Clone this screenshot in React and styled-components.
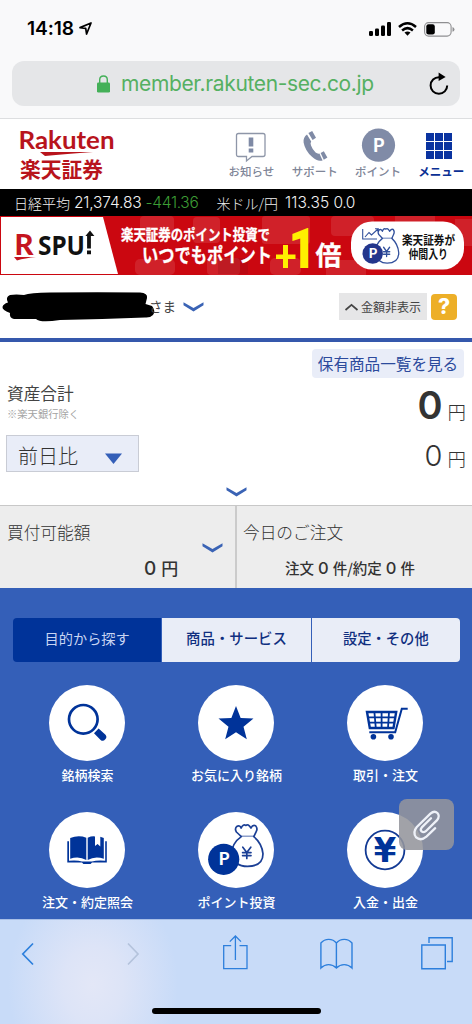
import React from 'react';
import styled, { createGlobalStyle } from 'styled-components';

const NAVY = '#003399';
const JP = '"Noto Sans CJK JP", "Noto Sans", sans-serif';

const GlobalStyle = createGlobalStyle`
  * { box-sizing: border-box; }
  body { margin: 0; background: #fff; font-family: ${JP}; color: #333; }
  svg { display: block; flex: none; overflow: visible; }
  button { font-family: inherit; border: 0; padding: 0; margin: 0; background: none; color: inherit; }
`;

const Screen = styled.div`
  width: 472px;
  height: 1024px;
  display: flex;
  flex-direction: column;
  overflow: hidden;
  background: #fff;
`;

const T = styled.span`
  display: block;
  white-space: pre;
  line-height: 1;
  font-size: ${(p) => p.$size}px;
  font-weight: ${(p) => p.$weight || 400};
  letter-spacing: ${(p) => p.$track || 0}px;
  color: ${(p) => p.$color || 'inherit'};
`;
const Digits = styled(T)`
  font-family: Inter, sans-serif;
`;

/* Browser chrome */
const BrowserTop = styled.div`
  height: 119px;
  background: #f9f9fa;
  border-bottom: 1px solid #dddee0;
  flex: none;
`;
const StatusBar = styled.div`
  height: 61px;
  padding: 0 17px 3px 27px;
  display: flex;
  align-items: center;
  justify-content: space-between;
`;
const StatusGroup = styled.div`
  display: flex;
  align-items: center;
  gap: ${(p) => p.$gap}px;
  color: #000;
`;
const AddressBar = styled.div`
  height: 45px;
  margin: 0 12px;
  padding: 0 11px 0 85px;
  border-radius: 12px;
  background: #e5e6e8;
  display: flex;
  align-items: center;
`;
const Url = styled(Digits)`
  color: #55b062;
  margin-left: 11px;
  flex: 1;
`;

/* Site header */
const SiteHeader = styled.header`
  height: 70px;
  display: flex;
  justify-content: space-between;
  padding: 0 0 0 20px;
  background: #fff;
  flex: none;
`;
const HeaderNav = styled.nav`
  display: flex;
  margin-right: -1px;
`;
const NavItem = styled.a`
  width: 63.3px;
  display: flex;
  flex-direction: column;
  align-items: center;
  color: ${(p) => (p.$active ? '#0a2f94' : '#7f8698')};
`;
const NavIcon = styled.div`
  height: 47px;
  padding-top: 9px;
`;

const Ticker = styled.div`
  height: 27px;
  background: #000;
  color: #f2f2f2;
  padding: 1px 14px 0;
  display: flex;
  align-items: center;
  flex: none;
`;
const Quote = styled(T)`
  margin-left: ${(p) => p.$gap || 0}px;
  font-family: ${(p) => (p.$latin ? 'Inter, sans-serif' : JP)};
`;
const Banner = styled.div`
  height: 59px;
  flex: none;
`;

/* User row */
const UserRow = styled.div`
  height: 67px;
  border-bottom: 4px solid #3558ac;
  padding: 0 15px 0 2px;
  display: flex;
  align-items: center;
  flex: none;
`;
const UserName = styled.div`
  display: flex;
  align-items: center;
  flex: 1;
`;
const Honorific = styled(T)`
  margin: 1px 7px 0 1px;
`;
const HideButton = styled.button`
  width: 88px;
  height: 27px;
  background: #e6e6e7;
  display: flex;
  align-items: center;
  justify-content: center;
  gap: 3px;
  margin-right: 4px;
`;
const HelpButton = styled.button`
  width: 26px;
  height: 26px;
  border-radius: 4px;
  background: #edaf28;
  color: #fff;
  display: flex;
  align-items: center;
  justify-content: center;
`;

/* Assets */
const Assets = styled.section`
  height: 163px;
  padding: 7px 6px 0 7px;
  display: flex;
  flex-direction: column;
  flex: none;
`;
const HoldingsLink = styled.a`
  align-self: flex-end;
  height: 29px;
  width: 152px;
  margin-right: 2px;
  border-radius: 4px;
  background: #e9edf8;
  display: flex;
  align-items: center;
  justify-content: center;
`;
const AssetRow = styled.div`
  display: flex;
  justify-content: space-between;
  height: ${(p) => p.$h}px;
`;
const AssetLabel = styled.div`
  padding-top: 7px;
  display: flex;
  flex-direction: column;
  gap: 7px;
`;
const Amount = styled.div`
  display: flex;
  align-items: baseline;
  gap: ${(p) => p.$gap}px;
  padding-top: ${(p) => p.$top}px;
  color: #333;
`;
const CompareSelect = styled.button`
  width: 133px;
  height: 37px;
  border: 1px solid #c9ccd5;
  background: #e9edf8;
  padding: 4px 16px 0 11px;
  display: flex;
  align-items: center;
  justify-content: space-between;
  color: #333;
  margin-left: -1px;
`;
const Expander = styled.div`
  display: flex;
  justify-content: center;
  padding-top: 15px;
`;

const Summary = styled.section`
  height: 83px;
  display: flex;
  background: #ededed;
  border-top: 1px solid #c8c8c8;
  flex: none;
`;
const SummaryCell = styled.div`
  width: ${(p) => p.$w}px;
  border-right: ${(p) => (p.$divided ? '2px solid #cbcbcb' : '0')};
  padding: 18px 12px 0 ${(p) => (p.$divided ? 7 : 6)}px;
`;
const SummaryValue = styled.div`
  display: flex;
  align-items: baseline;
  height: 20px;
  gap: ${(p) => p.$gap}px;
  margin: ${(p) => p.$top}px 0 0 ${(p) => p.$left}px;
`;
const SummaryHead = styled.div`
  display: flex;
  justify-content: space-between;
  align-items: flex-start;
  height: 17px;
`;
const ChevronSlot = styled.div`
  padding-top: 19px;
`;

/* Menu */
const Menu = styled.section`
  height: 331px;
  background: #345fb8;
  padding: 30px 12px 0 13px;
  position: relative;
  flex: none;
`;
const Tabs = styled.div`
  display: flex;
  gap: 1px;
  height: 44px;
  border-radius: 4px;
  overflow: hidden;
`;
const Tab = styled.button`
  flex: 1;
  display: flex;
  align-items: center;
  justify-content: center;
  padding-bottom: 3px;
  background: ${(p) => (p.$active ? NAVY : '#e9edf7')};
  color: ${(p) => (p.$active ? '#c9d5f2' : '#102f80')};
`;
const Grid = styled.div`
  display: grid;
  grid-template-columns: repeat(3, 149px);
  grid-auto-rows: 127px;
  padding-top: 23px;
  margin-left: -1px;
`;
const Tile = styled.a`
  display: flex;
  flex-direction: column;
  align-items: center;
  gap: 7px;
  color: #fff;
`;
const TileLabel = styled(T)`
  margin-left: 2px;
`;
const Disc = styled.div`
  width: 76px;
  height: 76px;
  border-radius: 50%;
  background: #fff;
`;
const ClipButton = styled.button`
  position: absolute;
  left: 399px;
  top: 211px;
  width: 55px;
  height: 51px;
  border-radius: 8px;
  background: rgba(148, 149, 156, 0.88);
`;

/* Browser bottom bar */
const BottomBar = styled.div`
  height: 105px;
  background: radial-gradient(ellipse 85px 110px at 93px 65px, #e3e7f7 0%, #dde4f7 35%, rgba(200, 219, 248, 0) 100%), #c8dbf8;
  border-top: 1px solid #a9bfe6;
  display: flex;
  flex-direction: column;
  align-items: center;
  flex: none;
`;
const BottomIcons = styled.div`
  height: 88px;
  width: 100%;
  padding: 15px 0 0 22px;
  display: grid;
  grid-template-columns: 105px 96px 97px 101px 1fr;
`;
const HomeBar = styled.div`
  width: 169px;
  height: 6px;
  border-radius: 3px;
  background: #000;
`;

const Chevron = () => (
  <svg width="21" height="10" viewBox="0 0 21 10">
    <path d="M0.5 0.3 L10.5 6 L20.5 0.3 V3.2 L10.5 9.6 L0.5 3.2Z" fill="#3a63b5" />
  </svg>
);

const LocationArrow = () => (
  <svg width="13" height="13" viewBox="0 0 13 13">
    <path d="M12 1 L7.6 12 L6.7 6.4 L1 5.6Z" fill="none" stroke="#000" strokeWidth="1.7" strokeLinejoin="round" />
  </svg>
);
const Signal = () => (
  <svg width="22" height="14" viewBox="0 0 22 14">
    <rect x="0" y="9" width="4" height="5" rx="1.2" />
    <rect x="6" y="6.5" width="4" height="7.5" rx="1.2" />
    <rect x="12" y="3.5" width="4" height="10.5" rx="1.2" />
    <rect x="18" y="0" width="4" height="14" rx="1.2" />
  </svg>
);
const Wifi = () => (
  <svg width="19" height="14" viewBox="0 0 19 14">
    <g fill="none" stroke="#000" strokeWidth="2.5">
      <path d="M1 5 Q9.5 -2.4 18 5" />
      <path d="M4.1 8.5 Q9.5 3.8 14.9 8.5" />
    </g>
    <path d="M6.5 10.6 Q9.5 8.2 12.5 10.6 L9.5 13.8Z" />
  </svg>
);
const Battery = () => (
  <svg width="31" height="15" viewBox="0 0 31 15">
    <rect x="0.6" y="0.6" width="26.5" height="13.5" rx="4" fill="none" stroke="#8f8f91" strokeWidth="1.1" />
    <rect x="2.3" y="2.3" width="8.5" height="10.1" rx="2.2" />
    <path d="M28.5 5 Q30.5 5.6 30.5 7.4 Q30.5 9.2 28.5 9.8Z" fill="#8f8f91" />
  </svg>
);
const Lock = () => (
  <svg width="13" height="18" viewBox="0 0 13 18">
    <path d="M2.7 8 V4.8 Q2.7 1 6.5 1 Q10.3 1 10.3 4.8 V8" fill="none" stroke="#44b058" strokeWidth="1.4" />
    <rect x="0" y="7.6" width="13" height="10" rx="1.4" fill="#44b058" />
  </svg>
);
const Reload = () => (
  <svg width="20" height="24" viewBox="0 0 20 24">
    <path d="M11 5.2 H10 A8.3 8.3 0 1 0 18.2 13.5" fill="none" stroke="#000" strokeWidth="2" />
    <path d="M9.6 0.5 L16.6 5 L9.6 9Z" />
  </svg>
);

const Logo = () => (
  <svg width="96" height="70" viewBox="0 0 96 70" fill="#b8141c">
    <text x="-1.5" y="30" fontFamily="Lato, sans-serif" fontWeight="700" fontSize="25" textLength="96" lengthAdjust="spacingAndGlyphs">Rakuten</text>
    <path d="M20 33 H73 Q46 35 25 37Z" />
    <text x="0" y="58.3" fontFamily="Noto Sans CJK JP" fontWeight="700" fontSize="21" textLength="83" lengthAdjust="spacingAndGlyphs">楽天証券</text>
  </svg>
);
const NoticeIcon = () => (
  <svg width="30" height="34" viewBox="0 0 30 34" fill="#7f8aa5">
    <path d="M2.5 5.5 H27 Q29 5.5 29 7.5 V26.5 Q29 28.5 27 28.5 H16 L10.5 33 V28.5 H2.5 Q0.5 28.5 0.5 26.5 V7.5 Q0.5 5.5 2.5 5.5Z" fill="#fff" stroke="#8e96a8" strokeWidth="1.3" />
    <rect x="12.7" y="9.5" width="4.6" height="9" />
    <rect x="12.7" y="20.5" width="4.6" height="4" />
  </svg>
);
const PhoneIcon = () => (
  <svg width="26" height="34" viewBox="0 0 26 34" fill="#7f8aa5">
    <path d="M5 6.6 L9.2 13.4 Q8 14.8 9 17.6 Q10.6 22 13.6 24.6 Q15.4 26 17.4 25.6 L20.6 32.4 Q15.8 34.2 10 28.8 Q3 22.4 1.6 14.4 Q1 9.6 5 6.6Z" />
    <path d="M6.4 5 L10.2 3 L14 9.8 L10.6 12Z" />
    <path d="M18.6 25 L21.8 23.2 L25.4 29.4 L21.8 31.8Z" />
  </svg>
);
const PointIcon = () => (
  <svg width="34" height="34" viewBox="0 0 34 34">
    <circle cx="17.5" cy="17.2" r="16.6" fill="#808ba7" />
    <text x="17.8" y="23.7" textAnchor="middle" fontFamily="Noto Sans CJK JP" fontWeight="700" fontSize="18" fill="#fff">P</text>
  </svg>
);
const GridIcon = () => (
  <svg width="30" height="34" viewBox="0 0 30 34" fill="#0a33a0">
    {[0, 1, 2].map((r) => [0, 1, 2].map((c) => <rect key={`${r}${c}`} x={c * 9} y={5 + r * 9} width="8" height="8" />))}
  </svg>
);

const MoneyBag = ({ stroke, width = 1.7 }) => (
  <g fill="none" stroke={stroke} strokeWidth={width} strokeLinejoin="round" strokeLinecap="round">
    <path d="M43.3 24.6 Q41 22.4 38.4 20 Q36.4 16.8 38.8 14.4 Q41.6 12.8 43.2 16 Q45 11.6 48 13.4 Q50 11.4 53 16 Q54.6 12.6 57.6 13.8 Q60 16.6 58.2 19.6 Q57 22.2 55.8 24.6 Z" />
    <path d="M43.3 24.6 Q34 31 33.5 42 Q36 54.4 49.5 54.4 Q65 54.4 65 41.8 Q64 31.4 55.8 24.6" fill="#fff" />
    <path d="M44.8 35.2 L48.8 40.4 L52.8 35.2 M48.8 40.4 V46.5 M44.6 40.6 H53 M44.6 43.6 H53" />
  </g>
);

const AdBanner = () => (
  <svg width="472" height="59" viewBox="0 0 472 59">
    <rect width="472" height="59" fill="#cb0710" />
    <g fill="#fff" opacity="0.1">
      <rect x="140" y="0" width="34" height="21" rx="4" />
      <rect x="193" y="1" width="27" height="26" rx="4" />
      <rect x="262" y="0" width="48" height="28" rx="3" />
      <rect x="331" y="0" width="43" height="20" rx="4" />
      <rect x="135" y="43" width="40" height="16" rx="5" />
      <rect x="207" y="42" width="33" height="17" rx="4" />
      <rect x="270" y="42" width="31" height="17" rx="5" />
      <rect x="326" y="44" width="40" height="15" />
      <rect x="395" y="0" width="40" height="16" />
      <rect x="455" y="3" width="17" height="27" />
    </g>
    <rect x="218" y="42" width="30" height="16" fill="#870b13" opacity="0.25" />
    <path d="M1 1 H103 L118 58 H1Z" fill="#fff" />
    <text x="14.5" y="39" fontFamily="Lato, sans-serif" fontWeight="900" fontSize="28" fill="#c51520" textLength="19" lengthAdjust="spacingAndGlyphs">R</text>
    <path d="M14 41 H36 Q25 42 17 44.5Z" fill="#c51520" />
    <text x="38" y="38.5" fontFamily="Noto Sans, sans-serif" fontWeight="700" fontSize="27" fill="#111" textLength="47" lengthAdjust="spacingAndGlyphs">SPU</text>
    <path d="M87 38.3 h4 v-3.8 h-4Z M87.1 32.5 H90.9 V20 H94.4 L90 14.5 L85.4 20 H87.1Z" fill="#111" />
    <g fontFamily="Noto Sans CJK JP" fontWeight="700" fill="#fff" stroke="#fff" strokeWidth="0.3">
      <text x="121" y="23.5" fontSize="15.3" textLength="149" lengthAdjust="spacingAndGlyphs">楽天証券のポイント投資で</text>
      <text x="142" y="46.7" fontSize="20" textLength="130" lengthAdjust="spacingAndGlyphs">いつでもポイント</text>
      <text x="315.5" y="48.5" fontSize="26" textLength="26" lengthAdjust="spacingAndGlyphs">倍</text>
    </g>
    <g fill="#fff000">
      <path d="M283 29 H288 V38.5 H295.5 V43 H288 V52 H283 V43 H276 V38.5 H283Z" />
      <text x="288.5" y="51.5" fontFamily="Roboto, sans-serif" fontWeight="900" fontSize="56" textLength="28" lengthAdjust="spacingAndGlyphs">1</text>
    </g>
    <rect x="351" y="5.5" width="113" height="48" rx="21" fill="#fff" />
    <g transform="translate(350 2) scale(0.75 0.83)">
      <MoneyBag stroke="#31509c" />
    </g>
    <path d="M362.7 13 V23 H377 M365 21 L369 16.5 L371.5 19 L378 13 M375 12.7 H378.3 V16" fill="none" stroke="#31509c" strokeWidth="1.1" />
    <circle cx="372.7" cy="37.5" r="10.2" fill="#23368c" />
    <text x="372.9" y="42.4" textAnchor="middle" fontFamily="Noto Sans CJK JP" fontWeight="700" fontSize="13.5" fill="#fff">P</text>
    <g fontFamily="Noto Sans CJK JP" fontWeight="700" fill="#111">
      <text x="402" y="29" fontSize="12.3" textLength="53" lengthAdjust="spacingAndGlyphs">楽天証券が</text>
      <text x="408.5" y="42.5" fontSize="12.3" textLength="39.5" lengthAdjust="spacingAndGlyphs">仲間入り</text>
    </g>
  </svg>
);

const Redaction = () => (
  <svg width="146" height="30" viewBox="0 0 146 30">
    <path d="M8 3 Q14 2 22 3 Q28 0.5 48 0.5 Q98 0 138 0.5 Q146 1 145 6 L143.5 12 L150 14 Q154 19 151 23 Q148 26 143 25.5 Q100 27 58 28 Q38 31 34 27 L12 27 Q7 26 8 21 Q0 18 0.5 15 Q1 12 6 10.5 Q3 5 8 3Z" />
  </svg>
);

const SearchIcon = () => (
  <svg width="76" height="76" viewBox="0 0 76 76">
    <circle cx="34.3" cy="34.3" r="14.3" fill="none" stroke={NAVY} strokeWidth="2.7" />
    <path d="M45 48.2 L49.6 43.6 L56.5 49.7 Q58.4 52 56.3 54.3 Q54 57 51.6 54.9Z" fill={NAVY} />
  </svg>
);
const starPoints = Array.from({ length: 10 }, (_, i) => {
  const r = i % 2 ? 7.9 : 18.4;
  const a = (Math.PI / 5) * i - Math.PI / 2;
  return `${38 + r * Math.cos(a)},${39.3 + r * Math.sin(a)}`;
}).join(' ');
const StarIcon = () => (
  <svg width="76" height="76" viewBox="0 0 76 76">
    <polygon points={starPoints} fill={NAVY} />
  </svg>
);
const CartIcon = () => (
  <svg width="76" height="76" viewBox="0 0 76 76" fill="none" stroke={NAVY}>
    <path d="M20 27 H49.2 L46.5 43 H22.8Z" strokeWidth="2.4" />
    <path d="M21 32.3 H48 M22 37.6 H47 M27.4 27 L28.8 43 M34.6 27 V43 M42 27 L41 43" strokeWidth="1.8" />
    <path d="M60.7 23.8 H54.8 L48.2 47.3 H22.3" strokeWidth="2" />
    <g fill={NAVY} stroke="none">
      <circle cx="26.4" cy="51.8" r="2.8" />
      <circle cx="44" cy="51.8" r="2.8" />
    </g>
  </svg>
);
const BookIcon = () => (
  <svg width="76" height="76" viewBox="0 0 76 76" fill={NAVY}>
    <path d="M18.3 29.3 H20 V48.7 Q28.5 48 33 49.5 H43 Q48 48 56.2 48.7 V29.3 H57.8 V50.6 H43 L41.6 52 H34.4 L33 50.6 H18.3Z" />
    <path d="M21.2 26 Q29.5 22.8 37.3 25.7 V48 Q30 43.6 21.2 46.7Z" />
    <path d="M38.7 25.7 Q42.5 24 46 24.4 V34 L48.6 32 L51.3 34.6 V24.8 L54.8 26 V46.7 Q46 43.6 38.7 48Z" />
  </svg>
);
const PointInvestIcon = () => (
  <svg width="76" height="76" viewBox="0 0 76 76">
    <MoneyBag stroke="#1b3f95" />
    <circle cx="25.7" cy="47.3" r="15.6" fill={NAVY} />
    <text x="26.2" y="53.2" textAnchor="middle" fontFamily="Noto Sans CJK JP" fontWeight="700" fontSize="17" fill="#fff">P</text>
  </svg>
);
const YenIcon = () => (
  <svg width="76" height="76" viewBox="0 0 76 76">
    <circle cx="38" cy="38" r="19.4" fill="none" stroke="#123a94" strokeWidth="1.8" />
    <text x="38" y="50.3" textAnchor="middle" fontFamily="DejaVu Sans" fontWeight="700" fontSize="33.5" textLength="22.5" lengthAdjust="spacingAndGlyphs" fill={NAVY}>¥</text>
  </svg>
);
const ClipIcon = () => (
  <svg width="55" height="51" viewBox="0 0 55 51">
    <path d="M36.2 29.2 L27.4 37.6 Q21.6 42.4 17.2 38.4 Q13.2 33.6 17.8 28 L31.4 14.6 Q35.4 11.2 38.4 14 Q41.4 17.2 37.8 21.4 L26.8 32.2 Q24.4 34 22.6 32.4 Q20.8 30.6 22.8 28.4 L32 19.2" fill="none" stroke="#eef1f8" strokeWidth="2.3" strokeLinecap="round" />
  </svg>
);

const BLUE = '#2d7fdc';
const BackIcon = ({ color, flip }) => (
  <svg width="12" height="38" viewBox="0 0 12 38">
    <path d={flip ? 'M1 8.5 L11 19 L1 29.5' : 'M11 8.5 L0.8 19 L11 29.5'} fill="none" stroke={color} strokeWidth="1.7" />
  </svg>
);
const ShareIcon = () => (
  <svg width="25" height="38" viewBox="0 0 25 38" fill="none" stroke={BLUE} strokeWidth="1.3">
    <path d="M8.2 10.6 H0.7 V33.7 H24 V10.6 H16.5 M12.4 25 V1 M6.8 6.6 L12.4 1 L18 6.6" />
  </svg>
);
const BookmarksIcon = () => (
  <svg width="33" height="38" viewBox="0 0 33 38" fill="none" stroke={BLUE} strokeWidth="1.4">
    <path d="M16.4 8 V33 M16.4 8 Q13.5 4.4 8.7 4.4 Q4 4.4 0.9 8 V33 Q4.4 29.6 8.6 29.6 Q13 29.6 16.4 33 Q19.8 29.6 24.2 29.6 Q28.6 29.6 32 33 V8 Q29 4.4 24.2 4.4 Q19.4 4.4 16.4 8" />
  </svg>
);
const TabsIcon = () => (
  <svg width="32" height="38" viewBox="0 0 32 38" fill="none" stroke={BLUE} strokeWidth="1.4">
    <path d="M0.8 10 H24.3 V33.8 H0.8Z M8 8 V2.8 H31.2 V26.5 H26" />
  </svg>
);

const NAV = [
  { label: 'お知らせ', icon: <NoticeIcon /> },
  { label: 'サポート', icon: <PhoneIcon /> },
  { label: 'ポイント', icon: <PointIcon /> },
  { label: 'メニュー', icon: <GridIcon />, active: true },
];
const TILES = [
  ['銘柄検索', <SearchIcon />],
  ['お気に入り銘柄', <StarIcon />],
  ['取引・注文', <CartIcon />],
  ['注文・約定照会', <BookIcon />],
  ['ポイント投資', <PointInvestIcon />],
  ['入金・出金', <YenIcon />],
];

export default function App() {
  return (
    <Screen>
      <GlobalStyle />
      <BrowserTop>
        <StatusBar>
          <StatusGroup $gap={5}>
            <Digits $size={19.2} $weight={600} $track={-0.1}>14:18</Digits>
            <LocationArrow />
          </StatusGroup>
          <StatusGroup $gap={7}>
            <Signal />
            <Wifi />
            <Battery />
          </StatusGroup>
        </StatusBar>
        <AddressBar>
          <Lock />
          <Url $size={21} $track={-0.36}>member.rakuten-sec.co.jp</Url>
          <Reload />
        </AddressBar>
      </BrowserTop>

      <SiteHeader>
        <Logo />
        <HeaderNav>
          {NAV.map((n) => (
            <NavItem key={n.label} $active={n.active}>
              <NavIcon>{n.icon}</NavIcon>
              <T $size={11.5} $weight={n.active ? 700 : 500}>{n.label}</T>
            </NavItem>
          ))}
        </HeaderNav>
      </SiteHeader>

      <Ticker>
        <Quote $size={14} $weight={300}>日経平均</Quote>
        <Quote $latin $size={15.5} $weight={300} $gap={4} $track={-0.15}>21,374.83</Quote>
        <Quote $latin $size={15.5} $weight={300} $gap={4} $track={-0.3} $color="#3d9c35">-441.36</Quote>
        <Quote $size={14} $weight={300} $gap={18}>米ドル/円</Quote>
        <Quote $latin $size={15.5} $weight={300} $gap={7} $track={0.1}>113.35</Quote>
        <Quote $latin $size={15.5} $weight={300} $gap={4} $track={-0.4}>0.0</Quote>
      </Ticker>

      <Banner><AdBanner /></Banner>

      <UserRow>
        <UserName>
          <Redaction />
          <Honorific $size={13.5} $color="#444">さま</Honorific>
          <Chevron />
        </UserName>
        <HideButton>
          <svg width="13" height="8" viewBox="0 0 13 8"><path d="M0.5 7 L6.5 1.8 L12.5 7" fill="none" stroke="#444" strokeWidth="1.7" /></svg>
          <T $size={12} $color="#444">金額非表示</T>
        </HideButton>
        <HelpButton><Digits $size={21} $weight={800}>?</Digits></HelpButton>
      </UserRow>

      <Assets>
        <HoldingsLink><T $size={15.6} $color="#2c4a9c">保有商品一覧を見る</T></HoldingsLink>
        <AssetRow $h={57}>
          <AssetLabel>
            <T $size={16.7} $color="#444">資産合計</T>
            <T $size={10.3} $color="#a3a3a3">※楽天銀行除く</T>
          </AssetLabel>
          <Amount $gap={5} $top={8}>
            <Digits $size={38} $weight={600}>0</Digits>
            <T $size={18.5} $weight={300}>円</T>
          </Amount>
        </AssetRow>
        <AssetRow $h={37}>
          <CompareSelect>
            <T $size={20} $weight={300}>前日比</T>
            <svg width="17" height="16" viewBox="0 0 17 16"><path d="M0 5.5 H17 L8.5 16Z" fill="#345fb8" /></svg>
          </CompareSelect>
          <Amount $gap={5} $top={6}>
            <Digits $size={29} $weight={300}>0</Digits>
            <T $size={18.5} $weight={300}>円</T>
          </Amount>
        </AssetRow>
        <Expander><Chevron /></Expander>
      </Assets>

      <Summary>
        <SummaryCell $w={237} $divided>
          <SummaryHead>
            <T $size={16.7} $weight={300}>買付可能額</T>
            <ChevronSlot><Chevron /></ChevronSlot>
          </SummaryHead>
          <SummaryValue $left={137} $gap={5} $top={18}>
            <Digits $size={19} $weight={500}>0</Digits>
            <T $size={17} $weight={500}>円</T>
          </SummaryValue>
        </SummaryCell>
        <SummaryCell $w={235}>
          <SummaryHead><T $size={16.7} $weight={300}>今日のご注文</T></SummaryHead>
          <SummaryValue $left={42} $gap={4} $top={19}>
            <T $size={14.5} $weight={500}>注文</T>
            <Digits $size={16.5} $weight={500}>0</Digits>
            <T $size={14.5} $weight={500}>件/約定</T>
            <Digits $size={16.5} $weight={500}>0</Digits>
            <T $size={14.5} $weight={500}>件</T>
          </SummaryValue>
        </SummaryCell>
      </Summary>

      <Menu>
        <Tabs>
          <Tab $active><T $size={14.2}>目的から探す</T></Tab>
          <Tab><T $size={14.4} $weight={500}>商品・サービス</T></Tab>
          <Tab><T $size={14.3} $weight={500}>設定・その他</T></Tab>
        </Tabs>
        <Grid>
          {TILES.map(([label, icon]) => (
            <Tile key={label}>
              <Disc>{icon}</Disc>
              <TileLabel $size={13} $weight={500}>{label}</TileLabel>
            </Tile>
          ))}
        </Grid>
        <ClipButton><ClipIcon /></ClipButton>
      </Menu>

      <BottomBar>
        <BottomIcons>
          <BackIcon color={BLUE} />
          <BackIcon color="#b4c3dc" flip />
          <ShareIcon />
          <BookmarksIcon />
          <TabsIcon />
        </BottomIcons>
        <HomeBar />
      </BottomBar>
    </Screen>
  );
}
